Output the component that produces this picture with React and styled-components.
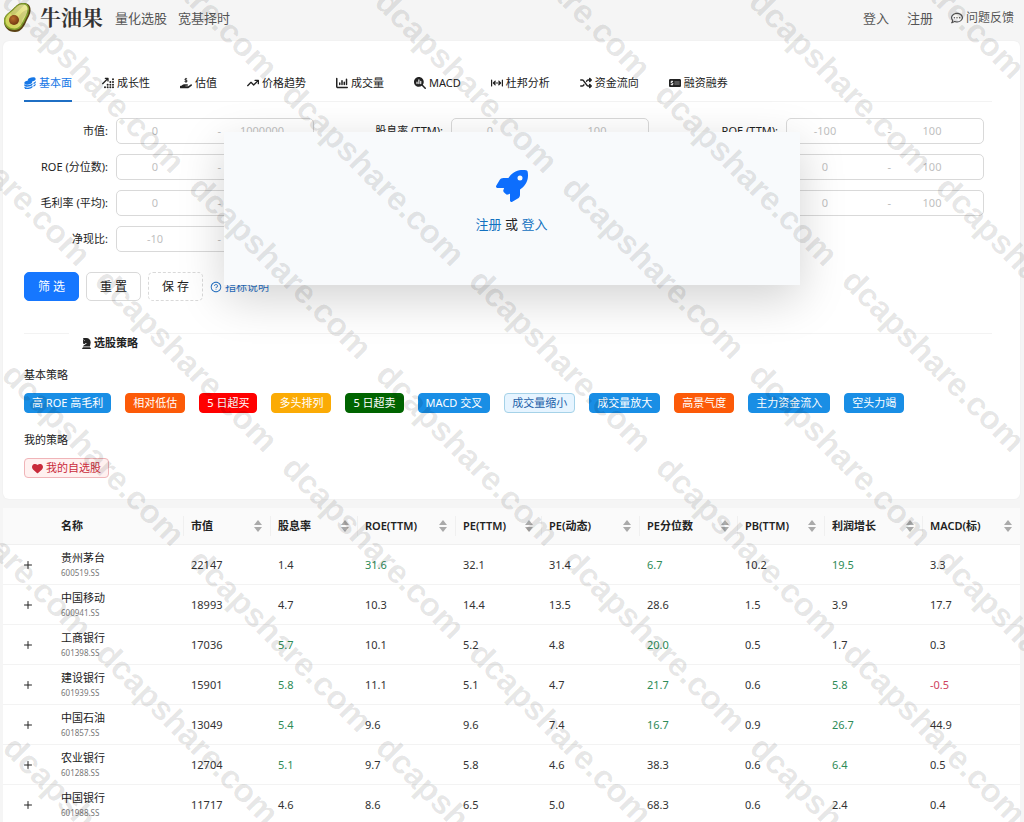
import React, { useState } from 'react';
import styled, { createGlobalStyle, css } from 'styled-components';
import {
    FaArrowUpRightDots,
    FaHandHoldingDollar,
    FaArrowTrendUp,
    FaChartColumn,
    FaMagnifyingGlassChart,
    FaArrowsLeftRightToLine,
    FaShuffle,
    FaMoneyCheckDollar,
    FaChessKnight,
    FaHeart,
    FaRocket,
    FaRegCommentDots,
} from 'react-icons/fa6';
import { AiOutlineQuestionCircle } from 'react-icons/ai';
import { Plus } from 'lucide-react';

const GlobalStyle = createGlobalStyle`
    *, *::before, *::after {
        box-sizing: border-box;
    }
    body {
        margin: 0;
        background: #f5f5f5;
        color: #222;
        font: 11px/16px "Noto Sans", "Noto Sans CJK SC", sans-serif;
    }
    a {
        text-decoration: none;
    }
    button, input {
        font: inherit;
    }
`;

const Page = styled.div`
    position: relative;
    height: 100vh;
    overflow: hidden;
`;

const Header = styled.header`
    display: flex;
    align-items: center;
    height: 41px;
    padding: 0 10px 6px 4px;
`;

const Brand = styled.a`
    display: flex;
    align-items: center;
    gap: 9px;
    margin-right: 12px;
    color: #333;
    font: 700 21px/28px "Liberation Serif", "Noto Serif CJK SC", "Noto Sans CJK SC", serif;
`;

const HeaderNav = styled.nav`
    display: flex;
    align-items: center;
    gap: ${props => props.$gap}px;
`;

const HeaderLink = styled.a`
    display: flex;
    align-items: center;
    gap: 3px;
    color: #555;
    font-size: ${props => props.$small ? 12 : 13}px;
`;

const Spacer = styled.div`
    flex: 1;
`;

const Main = styled.main`
    position: relative;
    margin: 0 4px 0 3px;
`;

const Card = styled.section`
    padding: 27px 28px 21px 21px;
    background: #fff;
    border-radius: 6px;
    box-shadow: 0 0 2px rgba(0, 0, 0, 0.06);
`;

const Tabs = styled.div`
    display: flex;
    gap: 30px;
    border-bottom: 1px solid #f3f3f3;
`;

const Tab = styled.button`
    display: flex;
    align-items: center;
    gap: 3px;
    height: 34px;
    margin-bottom: -1px;
    padding: 0 0 2px;
    border: 0;
    border-bottom: 2px solid ${props => props.$active ? '#1f6fc4' : 'transparent'};
    background: none;
    color: ${props => props.$active ? '#1677e6' : '#222'};
    white-space: nowrap;
    svg {
        font-size: 12px;
    }
`;

const FilterGrid = styled.div`
    display: grid;
    grid-template-columns: repeat(3, minmax(0, 1fr));
    gap: 10px 45px;
    margin-top: 16px;
    padding-right: 8px;
`;

const Field = styled.div`
    grid-column-start: ${props => props.$col};
    display: flex;
    align-items: center;
    gap: 8px;
`;

const FieldLabel = styled.label`
    flex: 0 0 84px;
    text-align: right;
    white-space: nowrap;
`;

const Range = styled.div`
    flex: 1;
    min-width: 0;
    display: flex;
    align-items: center;
    height: 26px;
    padding-right: 10px;
    border: 1px solid #d9d9d9;
    border-radius: 5px;
    background: #fff;
    color: #bbb;
`;

const RangeInput = styled.input`
    flex: ${props => props.$grow} 1 0;
    width: 0;
    min-width: 0;
    padding: 0;
    border: 0;
    outline: 0;
    background: none;
    text-align: center;
    &::placeholder {
        color: #bfbfbf;
        opacity: 1;
    }
`;

const Dash = styled.span`
    flex: 28 1 0;
    text-align: right;
`;

const Actions = styled.div`
    display: flex;
    align-items: center;
    gap: 7px;
    margin-top: 20px;
`;

const Button = styled.button`
    width: 55px;
    height: 29px;
    padding: 0;
    border: 1px ${props => props.$dashed ? 'dashed' : 'solid'} #d9d9d9;
    border-radius: 5px;
    background: #fff;
    color: #222;
    font-size: 12px;
    ${props => props.$primary && css`
        border-color: #1677ff;
        background: #1677ff;
        color: #fff;
    `}
`;

const HelpLink = styled.a`
    display: flex;
    align-items: center;
    gap: 3px;
    color: #1f6fc4;
    svg {
        font-size: 12px;
    }
`;

const Divider = styled.div`
    display: flex;
    align-items: flex-start;
    gap: 12px;
    margin-top: 32px;
`;

const Line = styled.div`
    flex: ${props => props.$short ? '0 0 45px' : 1};
    border-top: 1px solid #f3f3f3;
`;

const DividerTitle = styled.h2`
    display: flex;
    align-items: center;
    gap: 2px;
    margin: 0;
    font-size: 11px;
    font-weight: 700;
    line-height: 20px;
`;

const GroupTitle = styled.h3`
    margin: ${props => props.$first ? 14 : 19}px 0 0;
    font-size: 11px;
    font-weight: 400;
    line-height: 16px;
`;

const Tags = styled.div`
    display: flex;
    flex-wrap: wrap;
    gap: 14px;
    margin-top: 10px;
`;

const Tag = styled.button`
    display: flex;
    align-items: center;
    gap: 3px;
    height: 20px;
    padding: 0 7px;
    border: 1px solid ${props => props.$border || props.$bg};
    border-radius: 4px;
    background: ${props => props.$bg};
    color: ${props => props.$color || '#fff'};
    white-space: nowrap;
`;

const Popup = styled.div`
    position: absolute;
    top: 91px;
    left: 50%;
    z-index: 2;
    transform: translateX(-50%);
    width: 576px;
    height: 153px;
    padding-top: 38px;
    background: #f8fafc;
    box-shadow: 0 14px 43px rgba(0, 0, 0, 0.175);
    text-align: center;
    font-size: 13px;
    line-height: 20px;
    svg {
        display: block;
        margin: 0 auto 12px;
        color: #0d6efd;
        font-size: 32px;
    }
    a {
        color: #1271c0;
    }
`;

const Table = styled.table`
    width: 100%;
    margin-top: 9px;
    table-layout: fixed;
    border-collapse: separate;
    border-spacing: 0;
    background: #fff;
`;

const Th = styled.th`
    height: 37px;
    padding: 0 8px;
    border-bottom: 1px solid #f0f0f0;
    background: #fafafa;
    text-align: left;
    font-weight: 600;
    white-space: nowrap;
`;

const Sortable = styled.div`
    display: flex;
    align-items: center;
    justify-content: space-between;
    margin-left: -8px;
    padding-left: 7px;
    height: 20px;
    border-left: 1px solid #f0f0f0;
`;

const Td = styled.td`
    height: 40px;
    padding: 0 8px;
    border-bottom: 1px solid #f3f3f3;
    color: ${props => props.$tone || '#333'};
    line-height: 16px;
`;

const Name = styled.div`
    color: #222;
    line-height: 16px;
`;

const Code = styled.div`
    color: #777;
    font-size: 8px;
    line-height: 14px;
`;

const ExpandButton = styled.button`
    display: block;
    width: 12px;
    height: 12px;
    margin: 0 auto;
    padding: 0;
    border: 0;
    background: none;
    color: #222;
    svg {
        display: block;
    }
`;

const Watermark = styled.div`
    position: absolute;
    inset: 0;
    z-index: 3;
    overflow: hidden;
    pointer-events: none;
    user-select: none;
    color: rgba(0, 0, 0, 0.1);
    font: 700 33px/40px "Liberation Sans", sans-serif;
`;

const Mark = styled.span`
    position: absolute;
    transform-origin: 10px 20px;
    transform: translate(-10px, -20px) rotate(45deg);
`;

// two tilted piles of discs, the front one cut out of the back one
const CoinPiles = () => (
    <svg width="12" height="12" viewBox="0 0 24 24" fill="currentColor">
        <ellipse cx="15.500" cy="5" rx="8" ry="4" transform="rotate(-12 15.500 5)" />
        <path d="M19 11.500c2.500-1 4.500-2.500 4.500-4v3c0 1.500-1.500 3-4.500 4z" />
        <path d="M19 16.500c2.500-1 4.200-2.500 4.200-4v3c0 1.500-1.500 3-4.200 4z" />
        <ellipse cx="8.500" cy="11" rx="8" ry="4" transform="rotate(-12 8.500 11)" />
        <path d="M.5 14c1.500 3 12 3.500 16.500-1.500v3c-4 5-15 5-16.500 1.500z" />
        <path d="M.8 19c1.500 3 11.700 3.500 16.200-1.500v3c-4 4.500-14.500 4.500-16.200 1.500z" />
    </svg>
);

const tabs = [
    { text: '基本面', Icon: CoinPiles },
    { text: '成长性', Icon: FaArrowUpRightDots },
    { text: '估值', Icon: FaHandHoldingDollar },
    { text: '价格趋势', Icon: FaArrowTrendUp },
    { text: '成交量', Icon: FaChartColumn },
    { text: 'MACD', Icon: FaMagnifyingGlassChart },
    { text: '杜邦分析', Icon: FaArrowsLeftRightToLine },
    { text: '资金流向', Icon: FaShuffle },
    { text: '融资融券', Icon: FaMoneyCheckDollar },
];

const filters = [
    { id: 'cap', label: '市值', col: 1, min: '0', max: '1000000' },
    { id: 'dividend', label: '股息率 (TTM)', col: 2, min: '0', max: '100' },
    { id: 'roe', label: 'ROE (TTM)', col: 3, min: '-100', max: '100' },
    { id: 'roe-rank', label: 'ROE (分位数)', col: 1, min: '0', max: '100' },
    { id: 'third-2', label: '', col: 3, min: '0', max: '100' },
    { id: 'margin', label: '毛利率 (平均)', col: 1, min: '0', max: '100' },
    { id: 'third-3', label: '', col: 3, min: '0', max: '100' },
    { id: 'cash', label: '净现比', col: 1, min: '-10', max: '10' },
];

const BLUE = '#198ee5';
const ORANGE = '#fc5a08';

const strategies = [
    { text: '高 ROE 高毛利', bg: BLUE },
    { text: '相对低估', bg: ORANGE },
    { text: '5 日超买', bg: '#ff0000' },
    { text: '多头排列', bg: '#fbab05' },
    { text: '5 日超卖', bg: '#006400' },
    { text: 'MACD 交叉', bg: BLUE },
    { text: '成交量缩小', bg: '#e6f4ff', border: '#a5d2e8', color: '#1c5fa8' },
    { text: '成交量放大', bg: BLUE },
    { text: '高景气度', bg: ORANGE },
    { text: '主力资金流入', bg: BLUE },
    { text: '空头力竭', bg: BLUE },
];

const columns = [
    { title: '市值', width: 87 },
    { title: '股息率', width: 87 },
    { title: 'ROE(TTM)', width: 98 },
    { title: 'PE(TTM)', width: 86 },
    { title: 'PE(动态)', width: 98 },
    { title: 'PE分位数', width: 98 },
    { title: 'PB(TTM)', width: 87 },
    { title: '利润增长', width: 98 },
    { title: 'MACD(标)', width: 98 },
];

// good lists the value columns that are shown in green
const stocks = [
    { name: '贵州茅台', code: '600519.SS', values: ['22147', '1.4', '31.6', '32.1', '31.4', '6.7', '10.2', '19.5', '3.3'], good: [2, 5, 7] },
    { name: '中国移动', code: '600941.SS', values: ['18993', '4.7', '10.3', '14.4', '13.5', '28.6', '1.5', '3.9', '17.7'], good: [] },
    { name: '工商银行', code: '601398.SS', values: ['17036', '5.7', '10.1', '5.2', '4.8', '20.0', '0.5', '1.7', '0.3'], good: [1, 5] },
    { name: '建设银行', code: '601939.SS', values: ['15901', '5.8', '11.1', '5.1', '4.7', '21.7', '0.6', '5.8', '-0.5'], good: [1, 5, 7] },
    { name: '中国石油', code: '601857.SS', values: ['13049', '5.4', '9.6', '9.6', '7.4', '16.7', '0.9', '26.7', '44.9'], good: [1, 5, 7] },
    { name: '农业银行', code: '601288.SS', values: ['12704', '5.1', '9.7', '5.8', '4.6', '38.3', '0.6', '6.4', '0.5'], good: [1, 7] },
    { name: '中国银行', code: '601988.SS', values: ['11717', '4.6', '8.6', '6.5', '5.0', '68.3', '0.6', '2.4', '0.4'], good: [] },
];

const marks = [];
for (let row = -3; row < 7; row++) {
    for (let i = -4; i < 6; i++) {
        const x = Math.round(575 + i * 373.5 - row * 93.25);
        const y = Math.round(189 + row * 93.25);
        if (x > -160 && x < 1040) marks.push({ x, y });
    }
}

const toneOf = (stock, i) => {
    if (stock.values[i].startsWith('-')) return '#cf4460';
    return stock.good.includes(i) ? '#2e8b57' : undefined;
};

const Avocado = () => (
    <svg width="27" height="30" viewBox="0 0 27 30">
        <defs>
            <linearGradient id="flesh" x1="1" y1="0" x2="0" y2="1">
                <stop offset="0" stopColor="#efeaa0" />
                <stop offset="1" stopColor="#cbd04e" />
            </linearGradient>
            <radialGradient id="pit" cx="0.4" cy="0.35" r="0.7">
                <stop offset="0" stopColor="#b96d2c" />
                <stop offset="1" stopColor="#6d3410" />
            </radialGradient>
        </defs>
        <path d="M20 0c5 0 7 4 6.500 8-.5 4-2 6-4 10C20 24 17 29 11 29 4 29 0 24 0 18.500 0 12 5 10 9 6c4-4 6-6 11-6z" fill="#5a4214" />
        <path d="M19.500 0c4 0 6 3.500 5.500 7.500-.5 4-2 6-4 10C18.500 23 16 27 10.500 27 4.500 27 0 23 0 18 0 12 5 10 9 6c4-4 6-6 10.500-6z" fill="#86a52f" />
        <path d="M19 1.500c3.500 0 5 2.500 4.500 5.500-.5 4-2 6-4 10C17.500 21.500 15 25.500 10.500 25.500 5.500 25.500 1.500 22 1.500 18c0-5 4-7.500 8-11 3.500-3.500 5-5.500 9.500-5.500z" fill="url(#flesh)" />
        <circle cx="10" cy="17" r="5" fill="url(#pit)" />
    </svg>
);

const Sorter = () => (
    <svg width="8" height="12" viewBox="0 0 8 12" fill="#aaa">
        <path d="M4 0l4 5H0z" />
        <path d="M4 12l4-5H0z" />
    </svg>
);

const App = () => {
    const [activeTab, setActiveTab] = useState('基本面');

    return (
        <Page>
            <GlobalStyle />
            <Header>
                <Brand href="#">
                    <Avocado />
                    牛油果
                </Brand>
                <HeaderNav $gap={11}>
                    <HeaderLink href="#">量化选股</HeaderLink>
                    <HeaderLink href="#">宽基择时</HeaderLink>
                </HeaderNav>
                <Spacer />
                <HeaderNav $gap={18}>
                    <HeaderLink href="#">登入</HeaderLink>
                    <HeaderLink href="#">注册</HeaderLink>
                    <HeaderLink href="#" $small>
                        <FaRegCommentDots size={12} />
                        问题反馈
                    </HeaderLink>
                </HeaderNav>
            </Header>
            <Main>
                <Card>
                    <Tabs role="tablist">
                        {tabs.map(({ text, Icon }) =>
                            <Tab
                                key={text}
                                role="tab"
                                aria-selected={text === activeTab}
                                $active={text === activeTab}
                                onClick={() => setActiveTab(text)}
                            >
                                <Icon />
                                {text}
                            </Tab>
                        )}
                    </Tabs>
                    <FilterGrid>
                        {filters.map(({ id, label, col, min, max }) =>
                            <Field key={id} $col={col}>
                                <FieldLabel htmlFor={id}>{label && `${label}:`}</FieldLabel>
                                <Range>
                                    <RangeInput id={id} $grow={76} placeholder={min} />
                                    <Dash>-</Dash>
                                    <RangeInput aria-labelledby={id} $grow={82} placeholder={max} />
                                </Range>
                            </Field>
                        )}
                    </FilterGrid>
                    <Actions>
                        <Button $primary>筛 选</Button>
                        <Button>重 置</Button>
                        <Button $dashed>保 存</Button>
                        <HelpLink href="#">
                            <AiOutlineQuestionCircle />
                            指标说明
                        </HelpLink>
                    </Actions>
                    <Divider>
                        <Line $short />
                        <DividerTitle>
                            <FaChessKnight />
                            选股策略
                        </DividerTitle>
                        <Line />
                    </Divider>
                    <GroupTitle $first>基本策略</GroupTitle>
                    <Tags>
                        {strategies.map(({ text, bg, border, color }) =>
                            <Tag key={text} $bg={bg} $border={border} $color={color}>{text}</Tag>
                        )}
                    </Tags>
                    <GroupTitle>我的策略</GroupTitle>
                    <Tags>
                        <Tag $bg="#fff1f0" $border="#f0b4b8" $color="#c92a3a">
                            <FaHeart />
                            我的自选股
                        </Tag>
                    </Tags>
                </Card>
                <Table>
                    <colgroup>
                        <col width="50" />
                        <col width="130" />
                        {columns.map(({ title, width }) => <col key={title} width={width} />)}
                    </colgroup>
                    <thead>
                        <tr>
                            <Th />
                            <Th>名称</Th>
                            {columns.map(({ title }) =>
                                <Th key={title}>
                                    <Sortable>
                                        {title}
                                        <Sorter />
                                    </Sortable>
                                </Th>
                            )}
                        </tr>
                    </thead>
                    <tbody>
                        {stocks.map(stock =>
                            <tr key={stock.code}>
                                <Td>
                                    <ExpandButton aria-label={stock.name}>
                                        <Plus size={12} strokeWidth={2} />
                                    </ExpandButton>
                                </Td>
                                <Td>
                                    <Name>{stock.name}</Name>
                                    <Code>{stock.code}</Code>
                                </Td>
                                {stock.values.map((value, i) =>
                                    <Td key={i} $tone={toneOf(stock, i)}>{value}</Td>
                                )}
                            </tr>
                        )}
                    </tbody>
                </Table>
                <Popup>
                    <FaRocket />
                    <a href="#">注册</a> 或 <a href="#">登入</a>
                </Popup>
            </Main>
            <Watermark aria-hidden="true">
                {marks.map(({ x, y }) =>
                    <Mark key={`${x},${y}`} style={{ left: x, top: y }}>dcapshare.com</Mark>
                )}
            </Watermark>
        </Page>
    );
};

export default App;
